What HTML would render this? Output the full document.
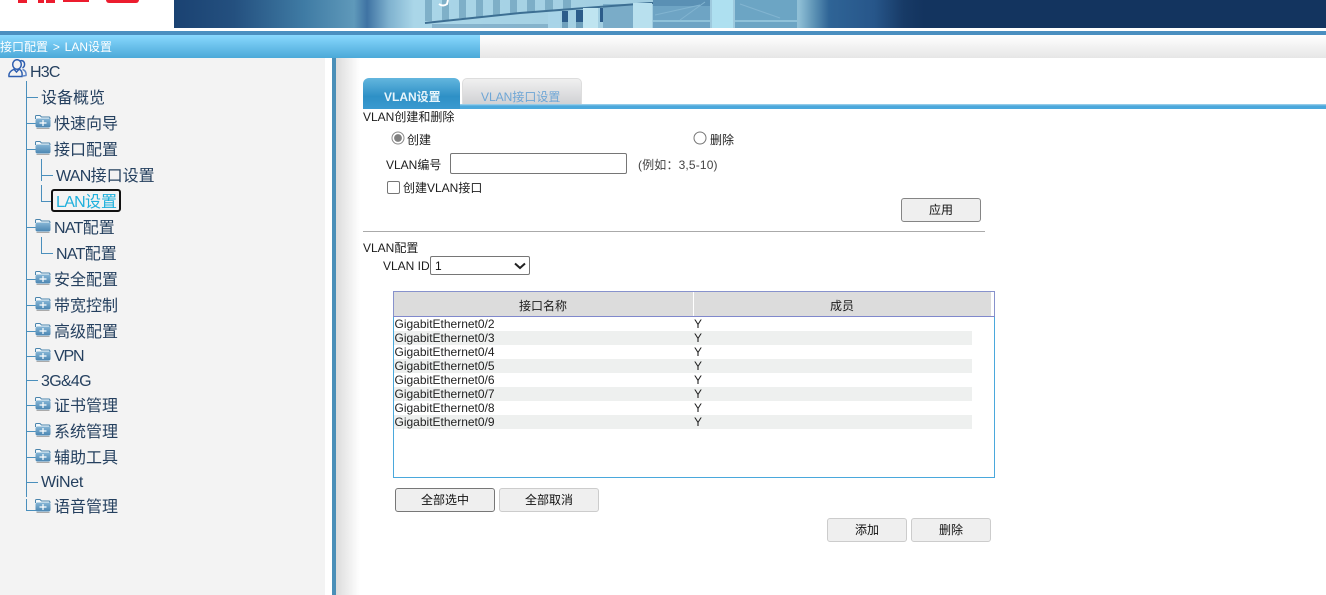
<!DOCTYPE html>
<html><head><meta charset="utf-8"><style>
html,body{margin:0;padding:0;width:1326px;height:595px;overflow:hidden;background:#fff}
body{position:relative;font:12px/14px "Liberation Sans","Noto Sans CJK SC",sans-serif;color:#1c1c1c}
.a{position:absolute}
.t{position:absolute;white-space:nowrap}
.n{position:absolute;white-space:nowrap;font-size:16px;line-height:20px;color:#25405f}
.n i{font-style:normal;letter-spacing:-.7px}
.b{position:absolute;box-sizing:border-box;height:24px;background:#efefef;border:1px solid #ccc;border-radius:3px;text-align:center;line-height:22px;color:#111}
.l{position:absolute;background:#4a8fbc}
.r{position:absolute;left:394px;width:578px;height:14px;line-height:14px;color:#222;text-indent:.5px}
.r.e{background:#eef0ef}
.r span{position:absolute;left:300px;text-indent:0}
</style></head><body>
<!-- logo -->
<div class="a" style="left:18px;top:0;width:9px;height:3px;background:#ec1c2e"></div>
<div class="a" style="left:38px;top:0;width:6px;height:3px;background:#ec1c2e"></div>
<div class="a" style="left:46px;top:0;width:9px;height:3px;background:#ec1c2e"></div>
<div class="a" style="left:63px;top:0;width:26px;height:2px;background:#ec1c2e"></div>
<div class="a" style="left:106px;top:0;width:33px;height:3px;background:#ec1c2e;border-radius:0 0 14px 14px"></div>
<!-- banner -->
<div class="a" style="left:174px;top:0;width:1152px;height:28px;background:linear-gradient(90deg,#1a4272 0,#24507f 60px,#3f7ba4 130px,#5f99ba 180px,#3f73a3 193px,#7fb2cf 215px,#aad6e8 240px,#9cc8dc 600px,#8fbfd6 625px,#5d93b5 640px,#2f6496 655px,#27568a 700px,#173a66 730px,#13345f 750px,#13345f 100%)"></div>
<svg class="a" style="left:420px;top:0" width="390" height="28" viewBox="420 0 390 28">
<g fill="#5d92b0" opacity=".55"><rect x="425" y="0" width="7" height="21"/><rect x="442" y="0" width="7" height="20"/><rect x="459" y="0" width="7" height="18"/><rect x="476" y="0" width="7" height="17"/><rect x="493" y="0" width="7" height="15"/><rect x="510" y="0" width="7" height="14"/><rect x="527" y="0" width="8" height="12"/><rect x="545" y="0" width="8" height="10"/><rect x="563" y="0" width="8" height="9"/></g>
<g fill="#6f9fbc" opacity=".6"><rect x="432" y="24" width="120" height="4"/></g>
<rect x="603" y="4" width="30" height="24" fill="#7aacc8"/>
<path d="M425 23L520 13L650 3L655 3" stroke="#3d6f93" stroke-width="2" fill="none"/>
<rect x="548" y="12" width="12" height="16" fill="#a8d4e8"/>
<rect x="583" y="8" width="15" height="20" fill="#bfe4f0"/>
<rect x="633" y="3" width="19" height="25" fill="#b8e0ee"/>
<g fill="#2c5c8a"><rect x="562" y="11" width="6" height="11"/><rect x="576" y="10" width="7" height="12"/><rect x="600" y="8" width="3" height="14"/></g>
<g fill="#6ea0bc"><rect x="562" y="22" width="6" height="6"/><rect x="576" y="22" width="7" height="6"/></g>
<rect x="653" y="0" width="57" height="28" fill="#6ea4c4"/>
<rect x="735" y="0" width="62" height="28" fill="#6ca5c4"/>
<rect x="653" y="0" width="57" height="6" fill="#5a90b4"/>
<rect x="712" y="0" width="21" height="28" fill="#aee0f0"/>
<path d="M653 21H710M735 21H797" stroke="#9ccbe0" stroke-width="1.500"/>
<path d="M655 15L700 5M680 20L705 2M740 4L780 18" stroke="#82b4d0" stroke-width="1" fill="none"/>
<path d="M439 4Q443 7 447 4L448 0" stroke="#fff" stroke-width="2" fill="none"/>
</svg>
<!-- bars -->
<div class="a" style="left:0;top:31px;width:1326px;height:4px;background:#4a8fc0"></div>
<div class="a" style="left:480px;top:35px;width:846px;height:23px;background:linear-gradient(#fff,#e6e6e6)"></div>
<div class="a" style="left:0;top:35px;width:480px;height:23px;background:linear-gradient(#88d8fe,#4ba9d8)"></div>
<div class="t" style="left:0;top:40px;color:#fff;word-spacing:1.500px">接口配置 &gt; LAN设置</div>
<!-- left panel -->
<div class="a" style="left:0;top:58px;width:325px;height:537px;background:#f3f3f3"></div>
<div class="a" style="left:332px;top:58px;width:4px;height:537px;background:#4a8fb8"></div>
<div class="a" style="left:336px;top:58px;width:24px;height:537px;background:linear-gradient(90deg,#dcdcdc,#fff)"></div>
<!-- tree lines -->
<div class="l" style="left:26px;top:81px;width:1px;height:416px"></div>
<div class="l" style="left:26px;top:499px;width:1px;height:11px"></div>
<div class="l" style="left:26px;top:510px;width:10px;height:1px"></div>
<div class="l" style="left:27px;top:97px;width:11px;height:1px"></div>
<div class="l" style="left:27px;top:123px;width:9px;height:1px"></div>
<div class="l" style="left:27px;top:149px;width:9px;height:1px"></div>
<div class="l" style="left:27px;top:227px;width:9px;height:1px"></div>
<div class="l" style="left:27px;top:279px;width:9px;height:1px"></div>
<div class="l" style="left:27px;top:305px;width:9px;height:1px"></div>
<div class="l" style="left:27px;top:331px;width:9px;height:1px"></div>
<div class="l" style="left:27px;top:356px;width:9px;height:1px"></div>
<div class="l" style="left:27px;top:380px;width:11px;height:1px"></div>
<div class="l" style="left:27px;top:405px;width:9px;height:1px"></div>
<div class="l" style="left:27px;top:431px;width:9px;height:1px"></div>
<div class="l" style="left:27px;top:457px;width:9px;height:1px"></div>
<div class="l" style="left:27px;top:482px;width:11px;height:1px"></div>
<div class="l" style="left:41px;top:159px;width:1px;height:22px"></div>
<div class="l" style="left:41px;top:175px;width:12px;height:1px"></div>
<div class="l" style="left:41px;top:185px;width:1px;height:16px"></div>
<div class="l" style="left:41px;top:201px;width:10px;height:1px"></div>
<div class="l" style="left:41px;top:237px;width:1px;height:17px"></div>
<div class="l" style="left:41px;top:253px;width:12px;height:1px"></div>
<!-- person icon -->
<svg class="a" style="left:8px;top:59px" width="19" height="19" viewBox="0 0 19 19" fill="none" stroke="#2f5fb0" stroke-width="1.500">
<ellipse cx="9" cy="5.500" rx="4.300" ry="4.800"/>
<path d="M12 2C14 1 16 2 16.500 4.500C16.800 6.500 16 8 14.500 9"/>
<path d="M1 17.500C.3 14 3 11.500 6 10.300L8.500 13L11 10.300C13.500 11 14.500 13.500 14 17.500Z"/>
<path d="M14.500 10.500C17 11 18.500 13.500 18 16.500L15 17" stroke="#5f86c8"/>
</svg>
<!-- folder icons -->
<svg width="0" height="0" class="a"><defs>
<linearGradient id="g" x1="0" y1="0" x2="0" y2="1"><stop offset="0" stop-color="#86b6d6"/><stop offset="1" stop-color="#4a86b2"/></linearGradient>
<symbol id="fp" viewBox="0 0 16 14"><path d="M.5 4V1.500Q.5.500 1.500.500H5L6.500 2H14Q15 2 15 4" fill="#f4f9fc" stroke="#4a84ac"/><rect x=".5" y="3.500" width="15" height="9" rx="2" fill="url(#g)"/><path d="M1.500 13.500h13" stroke="#aaa"/><path d="M4.500 8h7M8 5v6" stroke="#fff" stroke-width="1.200"/></symbol>
<symbol id="fo" viewBox="0 0 16 14"><path d="M.5 4V1.500Q.5.500 1.500.500H5L6.500 2H14Q15 2 15 4" fill="#f4f9fc" stroke="#4a84ac"/><rect x=".5" y="3.500" width="15" height="9" rx="2" fill="url(#g)"/><path d="M1.500 13.500h13" stroke="#aaa"/></symbol>
</defs></svg>
<svg class="a" style="left:35px;top:115px" width="16" height="14"><use href="#fp"/></svg>
<svg class="a" style="left:35px;top:141px" width="16" height="14"><use href="#fo"/></svg>
<svg class="a" style="left:35px;top:219px" width="16" height="14"><use href="#fo"/></svg>
<svg class="a" style="left:35px;top:271px" width="16" height="14"><use href="#fp"/></svg>
<svg class="a" style="left:35px;top:297px" width="16" height="14"><use href="#fp"/></svg>
<svg class="a" style="left:35px;top:323px" width="16" height="14"><use href="#fp"/></svg>
<svg class="a" style="left:35px;top:348px" width="16" height="14"><use href="#fp"/></svg>
<svg class="a" style="left:35px;top:397px" width="16" height="14"><use href="#fp"/></svg>
<svg class="a" style="left:35px;top:423px" width="16" height="14"><use href="#fp"/></svg>
<svg class="a" style="left:35px;top:449px" width="16" height="14"><use href="#fp"/></svg>
<svg class="a" style="left:35px;top:499px" width="16" height="14"><use href="#fp"/></svg>
<!-- tree text -->
<div class="n" style="left:30px;top:63px"><i style="letter-spacing:-.8px">H3C</i></div>
<div class="n" style="left:41px;top:89px">设备概览</div>
<div class="n" style="left:54px;top:115px">快速向导</div>
<div class="n" style="left:54px;top:141px">接口配置</div>
<div class="n" style="left:56px;top:167px"><i>WAN</i>接口设置</div>
<div class="a" style="left:51px;top:189px;width:66px;height:19px;border:2px solid #111;border-radius:3px"></div>
<div class="n" style="left:56px;top:193px;color:#1fb0dc"><i>LAN</i>设置</div>
<div class="n" style="left:54px;top:219px"><i>NAT</i>配置</div>
<div class="n" style="left:56px;top:245px"><i>NAT</i>配置</div>
<div class="n" style="left:54px;top:271px">安全配置</div>
<div class="n" style="left:54px;top:297px">带宽控制</div>
<div class="n" style="left:54px;top:323px">高级配置</div>
<div class="n" style="left:54px;top:347px"><i style="letter-spacing:-1.200px">VPN</i></div>
<div class="n" style="left:41px;top:372px"><i>3G&amp;4G</i></div>
<div class="n" style="left:54px;top:397px">证书管理</div>
<div class="n" style="left:54px;top:423px">系统管理</div>
<div class="n" style="left:54px;top:449px">辅助工具</div>
<div class="n" style="left:41px;top:473px"><i style="letter-spacing:-.3px">WiNet</i></div>
<div class="n" style="left:54px;top:498px">语音管理</div>
<!-- tabs -->
<div class="a" style="left:462px;top:78px;width:120px;height:27px;box-sizing:border-box;background:linear-gradient(#f0f0f0,#cfd0d3);border:1px solid #ddd;border-bottom:0;border-radius:5px 5px 0 0"></div>
<div class="a" style="left:363px;top:104px;width:963px;height:5px;background:linear-gradient(#a9d6ee,#4ba8dc 40%)"></div>
<div class="a" style="left:363px;top:78px;width:97px;height:31px;background:linear-gradient(#63b6de,#2e90c6 60%,#3a9ad0);border-radius:6px 6px 0 0"></div>
<div class="t" style="left:384px;top:90px;color:#e8f5fb;font-weight:bold">VLAN设置</div>
<div class="t" style="left:481px;top:90px;color:#6ea6d6">VLAN接口设置</div>
<!-- form -->
<div class="t" style="left:363px;top:110px">VLAN创建和删除</div>
<svg class="a" style="left:391px;top:131px" width="14" height="14"><circle cx="7" cy="7" r="6" fill="#fff" stroke="#8a8a8a"/><circle cx="7" cy="7" r="3.900" fill="#808080"/></svg>
<div class="t" style="left:407px;top:133px">创建</div>
<svg class="a" style="left:693px;top:131px" width="14" height="14"><circle cx="7" cy="7" r="6" fill="#fff" stroke="#767676"/></svg>
<div class="t" style="left:710px;top:133px">删除</div>
<div class="t" style="left:386px;top:158px">VLAN编号</div>
<div class="a" style="left:450px;top:153px;width:175px;height:19px;border:1px solid #767676;border-radius:2px;background:#fff"></div>
<div class="t" style="left:638px;top:158px;color:#444;letter-spacing:.15px">(例如：3,5-10)</div>
<div class="a" style="left:387px;top:181px;width:11px;height:11px;border:1px solid #767676;border-radius:2px;background:#fff"></div>
<div class="t" style="left:403px;top:181px">创建VLAN接口</div>
<div class="b" style="left:901px;top:198px;width:80px;border-color:#858585">应用</div>
<div class="a" style="left:363px;top:231px;width:622px;height:1px;background:#aaa"></div>
<div class="t" style="left:363px;top:241px">VLAN配置</div>
<div class="t" style="left:383px;top:259px">VLAN ID</div>
<div class="a" style="left:430px;top:256px;width:98px;height:17px;border:1px solid #767676;border-radius:2px;background:#fff"></div>
<div class="t" style="left:435px;top:259px;color:#111">1</div>
<svg class="a" style="left:514px;top:262px" width="12" height="8"><path d="M1 1.500L6 6L11 1.500" fill="none" stroke="#222" stroke-width="2"/></svg>
<!-- table -->
<div class="a" style="left:393px;top:291px;width:602px;height:187px;box-sizing:border-box;border:1px solid #4aa8dc"></div>
<div class="a" style="left:393px;top:291px;width:602px;height:1px;background:#8792cc"></div>
<div class="a" style="left:393px;top:291px;width:1px;height:26px;background:#8792cc"></div>
<div class="a" style="left:994px;top:291px;width:1px;height:26px;background:#8792cc"></div>
<div class="a" style="left:394px;top:292px;width:597px;height:24px;background:#dcdcdc"></div>
<div class="a" style="left:693px;top:292px;width:1px;height:24px;background:#fff"></div>
<div class="a" style="left:393px;top:316px;width:602px;height:1px;background:#8088cc"></div>
<div class="t" style="left:519px;top:299px">接口名称</div>
<div class="t" style="left:830px;top:299px">成员</div>
<div class="r" style="top:317px">GigabitEthernet0/2<span>Y</span></div>
<div class="r e" style="top:331px">GigabitEthernet0/3<span>Y</span></div>
<div class="r" style="top:345px">GigabitEthernet0/4<span>Y</span></div>
<div class="r e" style="top:359px">GigabitEthernet0/5<span>Y</span></div>
<div class="r" style="top:373px">GigabitEthernet0/6<span>Y</span></div>
<div class="r e" style="top:387px">GigabitEthernet0/7<span>Y</span></div>
<div class="r" style="top:401px">GigabitEthernet0/8<span>Y</span></div>
<div class="r e" style="top:415px">GigabitEthernet0/9<span>Y</span></div>
<div class="b" style="left:395px;top:488px;width:100px;border-color:#777">全部选中</div>
<div class="b" style="left:499px;top:488px;width:100px">全部取消</div>
<div class="b" style="left:827px;top:518px;width:80px">添加</div>
<div class="b" style="left:911px;top:518px;width:80px">删除</div>
</body></html>
